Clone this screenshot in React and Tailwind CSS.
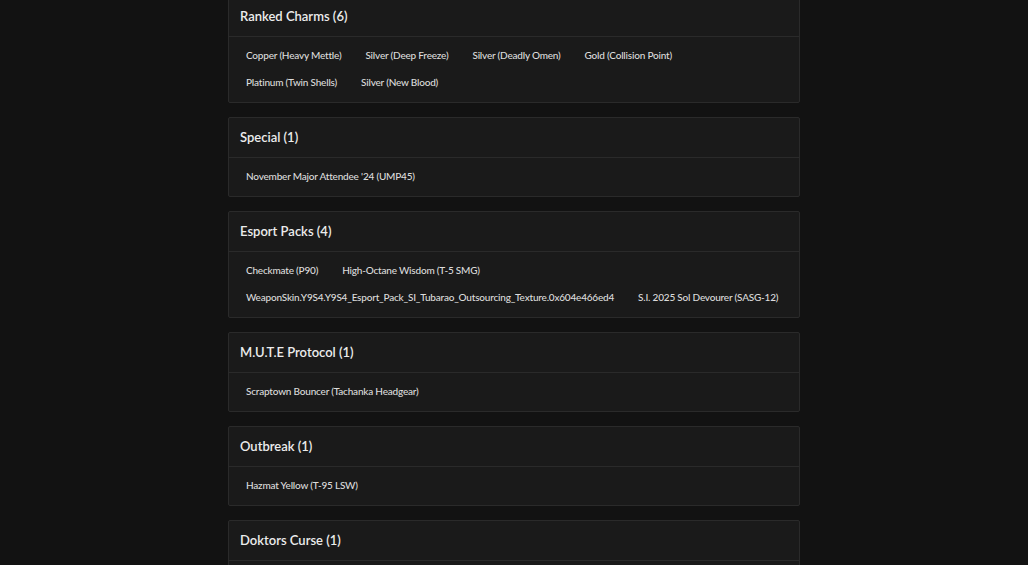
import React from "react";

const sections = [
  { title: "Ranked Charms (6)", items: ["Copper (Heavy Mettle)", "Silver (Deep Freeze)", "Silver (Deadly Omen)", "Gold (Collision Point)", "Platinum (Twin Shells)", "Silver (New Blood)"] },
  { title: "Special (1)", items: ["November Major Attendee '24 (UMP45)"] },
  { title: "Esport Packs (4)", items: ["Checkmate (P90)", "High-Octane Wisdom (T-5 SMG)", "WeaponSkin.Y9S4.Y9S4_Esport_Pack_SI_Tubarao_Outsourcing_Texture.0x604e466ed4", "S.I. 2025 Sol Devourer (SASG-12)"] },
  { title: "M.U.T.E Protocol (1)", items: ["Scraptown Bouncer (Tachanka Headgear)"] },
  { title: "Outbreak (1)", items: ["Hazmat Yellow (T-95 LSW)"] },
  { title: "Doktors Curse (1)", items: [] },
];

export default function App() {
  return (
    <div className="h-screen bg-[#121212] overflow-hidden" style={{ fontFamily: "Lato, 'Open Sans', sans-serif" }}>
      <div className="w-[572px] mx-auto flex flex-col gap-[14px] -mt-[4px]">
        {sections.map((s) => (
          <div key={s.title} className="bg-[#1a1a1a] border border-[#2a2a2a] rounded-[2px]">
            <div className="h-[40px] flex items-center px-[11px] border-b border-[#2a2a2a] text-[13px] font-semibold text-[#ececec]">
              {s.title}
            </div>
            <div className="flex flex-wrap gap-x-[12px] pl-[11px] pr-[10px] pt-[5px] pb-[6px] min-h-[38px]">
              {s.items.map((it) => (
                <div key={it} className="h-[27px] flex items-center px-[6px] text-[10px] font-medium tracking-[-0.2px] text-[#dcdcdc]">
                  {it}
                </div>
              ))}
            </div>
          </div>
        ))}
      </div>
    </div>
  );
}
